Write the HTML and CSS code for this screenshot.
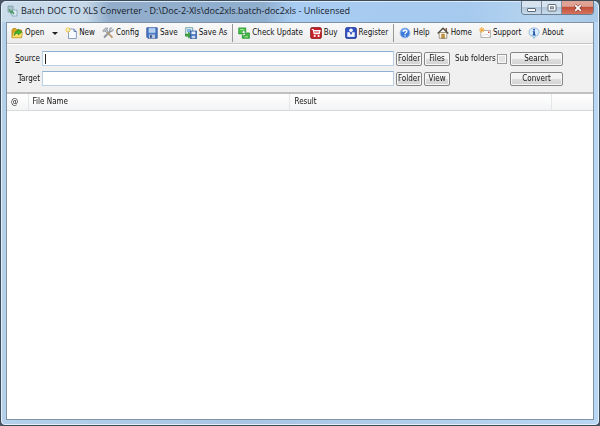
FILE: index.html
```
<!DOCTYPE html>
<html lang="en">
<head>
  <meta charset="UTF-8" />
  <meta name="viewport" content="width=device-width, initial-scale=1.0"/>
  <title>Batch DOC TO XLS Converter</title>
  <link rel="stylesheet" href="styles.css">
</head>
<body>
  <div class="window">
    <header class="titlebar">
      <svg class="app-icon" viewBox="0 0 12 12">
        <path d="M1 1h5v6H1z" fill="#a9c4c9" stroke="#7d959d" stroke-width=".7"/>
        <path d="M5 5h5v6H5z" fill="#dcebf4" stroke="#7d98ad" stroke-width=".7"/>
        <path d="M2 4l2 4 1-2 2 3" fill="none" stroke="#4f9a68" stroke-width="1.4"/>
      </svg>
      <h1 class="title">Batch DOC TO XLS Converter - D:\Doc-2-Xls\doc2xls.batch-doc2xls - Unlicensed</h1>
      <div class="window-controls">
        <button class="win-btn" aria-label="Minimize">
          <svg viewBox="0 0 12 10"><rect x="1.5" y="5.5" width="8" height="3" rx=".5" fill="#fff" stroke="#5e6b79"/></svg>
        </button>
        <button class="win-btn" aria-label="Maximize">
          <svg viewBox="0 0 12 10"><rect x="2" y="1.5" width="8" height="6.5" rx=".6" fill="#fff" stroke="#5e6b79"/><rect x="4.5" y="3.8" width="3" height="2" fill="#b4c0cc" stroke="#5e6b79" stroke-width=".8"/></svg>
        </button>
        <button class="win-btn win-close" aria-label="Close">
          <svg viewBox="0 0 12 10"><path d="M3 2l6 6M9 2L3 8" stroke="#7b3a35" stroke-width="3"/><path d="M3.2 2.2l5.6 5.6M8.8 2.2L3.2 7.8" stroke="#fff" stroke-width="1.8"/></svg>
        </button>
      </div>
    </header>

    <main class="client">
      <nav class="toolbar">
        <div class="split">
          <button class="tool">
            <svg viewBox="0 0 12 12"><path d="M1 3l1-1.4h3L6 3h4.5v7.5H1z" fill="#e0a91e" stroke="#a87812" stroke-width=".7"/><path d="M2.2 5H11.5l-1 5.8H1z" fill="#ffe169" stroke="#b98a1c" stroke-width=".6"/><path d="M3.2 8.6C3 5.4 5 3.6 7 3.8V2l3.8 3L7.3 8V6.2C5.6 6 4.3 6.8 3.2 8.6z" fill="#43b82c" stroke="#23801a" stroke-width=".6"/></svg>
            Open
          </button>
          <button class="drop" aria-label="Recent files"></button>
        </div>
        <button class="tool">
          <svg viewBox="0 0 12 12"><path d="M3.5 2H9l2.4 2.4V11.5H3.5z" fill="#f7fbff" stroke="#7089b0" stroke-width=".8"/><path d="M9 2v2.5h2.4" fill="#c5d8f0" stroke="#506c9c" stroke-width=".8"/><path d="M3 0v6M0 3h6M1 1l4 4M5 1L1 5" stroke="#f5c23a" stroke-width=".9"/><circle cx="3" cy="3" r="1.2" fill="#fff2a8"/></svg>
          New
        </button>
        <button class="tool">
          <svg viewBox="0 0 12 12"><path d="M2 10.5L9 3.5" stroke="#8c959e" stroke-width="1.8"/><path d="M11.3 2.1L9.8 3.5 8.5 2.3 9.9.8C8.3.4 7 1.5 7.2 3.1l1.5 1.5c1.8.4 3-1 2.6-2.5z" fill="#c1c7cd" stroke="#78828c" stroke-width=".5"/><path d="M5.3 5.4l5.2 5.2" stroke="#b79a72" stroke-width="1.8"/><path d="M.6 3.8L3.7.9 6 1.1 4.8 2.2 6 4.4 4.5 5.7 3 3.8 1.8 4.9z" fill="#b9c0c7" stroke="#79838d" stroke-width=".6"/></svg>
          Config
        </button>
        <button class="tool">
          <svg viewBox="0 0 12 12"><path d="M.8.8h10.4v10.4H1.9L.8 10.1z" fill="#497cc8" stroke="#2a4c93" stroke-width=".8"/><path d="M2.7 1.2h6.6v4.5H2.7z" fill="#c4daf6"/><path d="M3.5 2.6h5M3.5 4h5" stroke="#9dbbe2" stroke-width=".6"/><path d="M3 7.5h6v3.7H3z" fill="#b8c6d9"/><path d="M4 8.2h1.8v2.6H4z" fill="#264985"/></svg>
          Save
        </button>
        <button class="tool">
          <svg viewBox="0 0 12 12"><path d="M.7.7h7v8h-7z" fill="#eaf4e9" stroke="#4f90a0" stroke-width=".8"/><path d="M2 2h4.2v3H2z" fill="#88b6e9"/><path d="M.5 7h3V5l3 3.2-3 3v-2h-3z" fill="#40ad38" stroke="#24812a" stroke-width=".5"/><path d="M5.2 4h6.4v7.5H5.2z" fill="#4776c1" stroke="#294b8c" stroke-width=".7"/><path d="M6.5 4.5h3.9v2.6H6.5z" fill="#e8f0fc"/><path d="M6.7 8.8h3.5v2.5H6.7z" fill="#cad6e7"/></svg>
          Save As
        </button>
        <span class="separator"></span>
        <button class="tool">
          <svg viewBox="0 0 12 12"><path d="M.7.9h7.1v4.3L6.2 3.8 4.4 5.4l1.3 1.5H.7V2.6z" fill="#4cc24a" stroke="#1b8a28" stroke-width=".7"/><path d="M4.4 5.4l1.8-1.6" stroke="#fff"/><path d="M11.4 11.3H4.3V7.8l1.6 1.3 1.8-1.6-1.2-1.6h4.9z" fill="#43b944" stroke="#1b8a28" stroke-width=".7"/><path d="M2.2 2.5h3.4M6.6 9.8h3.4" stroke="#b5eaa9" stroke-width=".9"/></svg>
          Check Update
        </button>
        <button class="tool">
          <svg viewBox="0 0 12 12"><rect x=".6" y=".6" width="10.8" height="10.8" rx="1.5" fill="#c62127" stroke="#86151b" stroke-width=".8"/><path d="M1.8 2.5h1.4l1 4.2h5l.8-3.2H3.6" fill="none" stroke="#fff" stroke-width="1.2"/><path d="M4.3 5h5" stroke="#fff"/><circle cx="4.7" cy="9" r="1.1" fill="#fff"/><circle cx="8.6" cy="9" r="1.1" fill="#fff"/></svg>
          Buy
        </button>
        <button class="tool">
          <svg viewBox="0 0 12 12"><rect x=".6" y=".6" width="10.8" height="10.8" rx="1.5" fill="#3155c8" stroke="#202f8c" stroke-width=".8"/><circle cx="6" cy="3.2" r="1.8" fill="#fff"/><path d="M2.3 5.2h7.4v4.7H2.3z" fill="#f3f6ff"/><path d="M4.6 5.2h2.8L6 8.3z" fill="#2b43ae"/></svg>
          Register
        </button>
        <span class="separator"></span>
        <button class="tool">
          <svg viewBox="0 0 12 12"><circle cx="6" cy="6" r="4.9" fill="#3b7adb" stroke="#94b8e7"/><path d="M2.3 4.4C3.2 2 7.8 1.4 9.6 4.2 7 3.5 5 5.8 2.3 4.4z" fill="#8fbaf3"/><path d="M4.3 4.6C4.4 2.7 7.8 2.7 7.8 4.6 7.8 5.8 6 5.8 6 7.2M6 8.2v1.2" fill="none" stroke="#fff" stroke-width="1.3"/></svg>
          Help
        </button>
        <button class="tool">
          <svg viewBox="0 0 12 12"><path d="M2.2 5.5h7.6v5.8H2.2z" fill="#fff6dc" stroke="#80765f" stroke-width=".7"/><path d="M8.5 1h1.5v3H8.5z" fill="#8b5b42"/><path d="M.7 6.5L6 1.2l5.3 5.3" fill="none" stroke="#4f4b42" stroke-width="1.4"/><path d="M4.8 7.2h2.5v4H4.8z" fill="#d2a043" stroke="#81612b" stroke-width=".6"/></svg>
          Home
        </button>
        <button class="tool">
          <svg viewBox="0 0 12 12"><path d="M1.8 3.5h9.7V10.5H1.8z" fill="#fff" stroke="#a6a29f" stroke-width=".8"/><path d="M2.2 10L5.4 7l1.3 1L8 7l3.2 3" fill="none" stroke="#c8c3be" stroke-width=".7"/><path d="M9 4.5h1.5V6H9z" fill="#d94d39"/><path d="M2.8 0v6M0 3h5.6M.8 1l4 4M4.8 1l-4 4" stroke="#f4a62c" stroke-width=".9"/></svg>
          Support
        </button>
        <button class="tool">
          <svg viewBox="0 0 12 12"><path d="M6 .9c3 0 5 1.7 5 4.3 0 2.3-1.6 3.8-3.8 4.1L6 11.5 4.8 9.3C2.6 9 1 7.5 1 5.2 1 2.6 3 .9 6 .9z" fill="#d9ebfc" stroke="#82add6" stroke-width=".8"/><path d="M5.2 2h1.7v1.4H5.2zM4.7 4.2h2.2v3.3h.8v.9H4.5v-.9h.7V5h-.5z" fill="#174f9f"/></svg>
          About
        </button>
      </nav>

      <form class="paths">
        <div class="path-row">
          <label class="path-label" for="source"><u>S</u>ource</label>
          <input class="path-input" id="source" type="text" autofocus>
          <button class="btn" type="button">Folder</button>
          <button class="btn" type="button">Files</button>
          <div class="sub-folders">
            <label for="sub">Sub folders</label>
            <input class="check" id="sub" type="checkbox">
          </div>
          <button class="btn" type="button">Search</button>
        </div>
        <div class="path-row">
          <label class="path-label" for="target"><u>T</u>arget</label>
          <input class="path-input" id="target" type="text">
          <button class="btn" type="button">Folder</button>
          <button class="btn" type="button">View</button>
          <div></div>
          <button class="btn" type="button">Convert</button>
        </div>
      </form>

      <div class="list">
        <table class="files">
          <thead>
            <tr>
              <th class="col-mark">@</th>
              <th class="col-name">File Name</th>
              <th class="col-result">Result</th>
              <th class="col-rest"></th>
            </tr>
          </thead>
          <tbody></tbody>
        </table>
      </div>
    </main>
  </div>
</body>
</html>
```
FILE: styles.css
```
* { margin: 0; padding: 0; box-sizing: border-box; }
body { background: #4a5866; font-family: "DejaVu Sans Condensed", "Open Sans", sans-serif; font-size: 8px; color: #111; }
button, input { font: inherit; color: inherit; }

.window {
  min-height: 100vh; display: flex; flex-direction: column;
  padding: 0 5px 5px; border: 1px solid #3d4a57; border-radius: 6px 6px 5px 5px;
  background: linear-gradient(90deg, #b5d0ea, #a8c5e3 40%, #b9d7f2);
  box-shadow: inset 0 0 0 1px #e4f0fa;
}

.titlebar { display: flex; align-items: flex-start; height: 21px; margin: 0 -4px; padding-left: 5px; border-radius: 5px 5px 0 0;
  background: linear-gradient(90deg, #cbdcea 0, #c5d8e8 14%, #92adca 18%, #8fafcf 44%, #a9cdf2 49%, #a6caee 78%, #b5d3ee 90%, #a9c9e6);
  box-shadow: inset 0 1px 0 #dcebf7;
}
.app-icon { width: 12px; height: 12px; margin-top: 4px; flex: none; }
.title { flex: 1; min-width: 0; margin-left: 2px; font-family: "Open Sans", sans-serif; font-size: 9px; font-weight: 400; line-height: 20px; white-space: nowrap; overflow: hidden; color: #17212b; }
.window-controls { display: flex; margin-right: 4px; border: 1px solid #6d7f92; border-top: 0; border-radius: 0 0 4px 4px; overflow: hidden; }
.win-btn { width: 20px; height: 13px; border: 0; border-right: 1px solid #7b8da0; display: flex; align-items: center; justify-content: center;
  background: linear-gradient(#d6e3ef 0 45%, #b3c7da 50%, #c9dcec); }
.win-btn svg { width: 12px; height: 10px; }
.win-close { width: 31px; border-right: 0; background: linear-gradient(#dfa294 0 40%, #c1503c 50%, #d6735a); }

.client { flex: 1; display: flex; flex-direction: column; background: #f0f0f0; border: 1px solid #7f93a6; }

.toolbar { display: flex; align-items: center; gap: 7px; height: 21px; padding: 0 4px;
  background: linear-gradient(#f9f9f9, #ececec); border-bottom: 1px solid #c6c6c6; }
.tool { display: flex; align-items: center; gap: 2px; border: 0; background: none; line-height: 12px; white-space: nowrap; }
.tool svg { width: 12px; height: 12px; flex: none; }
.split { display: flex; align-items: center; gap: 8px; }
.drop { width: 6px; height: 12px; border: 0; background: none; }
.drop::before { content: ""; display: block; width: 0; border: 3px solid transparent; border-top-color: #222; border-bottom: 0; }
.separator { width: 1px; height: 18px; margin: 0 -2px; background: #969696; }

.paths { display: flex; flex-direction: column; gap: 5px; padding: 6px 30px 6px 8px; border-top: 1px solid #fff; }
.path-row { display: grid; grid-template-columns: 25px 1fr 26px 26px 56px 53px; column-gap: 2px; align-items: center; }
.path-label { text-align: right; }
.path-input { width: 100%; height: 15px; padding: 0 2px; border: 1px solid #b9d0e6; border-top-color: #8fb0cf; background: #fff; outline: none; }
/* steady caret in place of the blinking one */
.path-input:focus:invalid, .path-input:focus { caret-color: transparent; background: linear-gradient(#222, #222) 2px 50% / 1px 10px no-repeat #fff; }
.btn { height: 14px; border: 1px solid #858585; border-radius: 2px; line-height: 10px;
  background: linear-gradient(#f4f4f4 0 45%, #dedede 50%, #d2d2d2); box-shadow: inset 0 0 0 1px #f8f8f8; }
.sub-folders { display: flex; align-items: center; justify-content: space-between; padding: 0 1px 0 3px; white-space: nowrap; }
.check { appearance: none; flex: none; width: 10px; height: 10px; border: 1px solid #9a9a9a; background: #e4e4e4; box-shadow: inset 0 0 0 1px #fafafa; }
.check:checked { background: #3b7adb; }

.list { flex: 1; background: #fff; border-top: 2px solid #c0c0c0; }
.files { width: 100%; table-layout: fixed; border-collapse: collapse; }
.files th { height: 16px; padding-left: 4px; text-align: left; font-weight: 400;
  background: linear-gradient(#fff, #f3f4f5); border-right: 1px solid #e4e6e9; border-bottom: 1px solid #d9d9d9; }
.files .col-mark { width: 21px; }
.files .col-rest { width: 7%; border-right: 0; }
```
